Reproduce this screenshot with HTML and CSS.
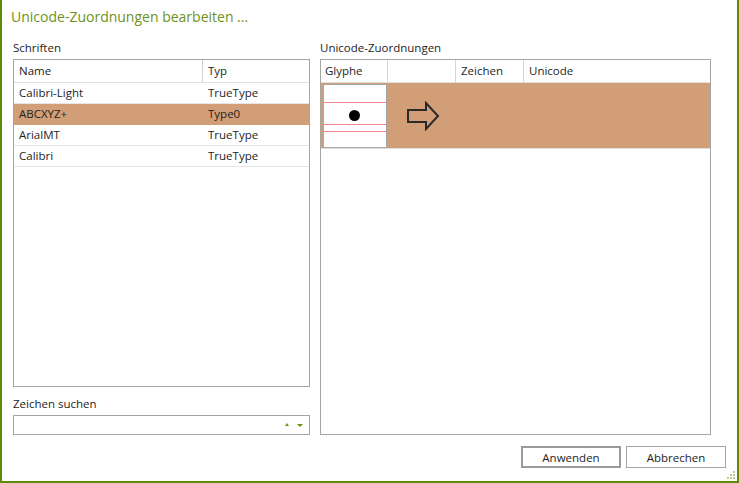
FILE: index.html
```html
<!DOCTYPE html>
<html>
<head>
<meta charset="utf-8">
<title>Unicode-Zuordnungen bearbeiten</title>
<link rel="stylesheet" href="styles.css">
</head>
<body>

<div class="dialog">
  <div class="title">Unicode-Zuordnungen bearbeiten ...</div>

  <div class="main">
    <!-- linke Spalte: Schriften -->
    <div class="col-left">
      <div class="label">Schriften</div>
      <div class="box font-list">
        <div class="row head">
          <div class="cell c-name">Name</div>
          <div class="cell c-typ">Typ</div>
        </div>
        <div class="row">
          <div class="cell c-name">Calibri-Light</div>
          <div class="cell c-typ">TrueType</div>
        </div>
        <div class="row selected">
          <div class="cell c-name">ABCXYZ+</div>
          <div class="cell c-typ">Type0</div>
        </div>
        <div class="row">
          <div class="cell c-name">ArialMT</div>
          <div class="cell c-typ">TrueType</div>
        </div>
        <div class="row">
          <div class="cell c-name">Calibri</div>
          <div class="cell c-typ">TrueType</div>
        </div>
      </div>

      <div class="label label-search">Zeichen suchen</div>
      <div class="combo">
        <span class="spin">
          <svg width="22" height="8" viewBox="0 0 22 8">
            <polygon points="1,5 5,5 3,2" fill="#6a9412"/>
            <polygon points="13,3 19,3 16,6" fill="#6a9412"/>
          </svg>
        </span>
      </div>
    </div>

    <!-- rechte Spalte: Unicode-Zuordnungen -->
    <div class="col-right">
      <div class="label">Unicode-Zuordnungen</div>
      <div class="box map-list">
        <div class="row head">
          <div class="cell m-glyph">Glyphe</div>
          <div class="cell m-arrow"></div>
          <div class="cell m-char">Zeichen</div>
          <div class="cell m-uni">Unicode</div>
        </div>
        <div class="map-row">
          <div class="glyph-box">
            <span class="guide g1"></span>
            <span class="guide g2"></span>
            <span class="guide g3"></span>
            <span class="dot"></span>
          </div>
          <div class="arrow">
            <svg width="34" height="30" viewBox="0 0 34 30">
              <polygon points="2,9 20,9 20,2 32,15 20,28 20,21 2,21" fill="none" stroke="#2a2a2a" stroke-width="2" stroke-linejoin="miter"/>
            </svg>
          </div>
        </div>
      </div>
    </div>
  </div>

  <div class="footer">
    <button class="btn default">Anwenden</button>
    <button class="btn">Abbrechen</button>
  </div>

  <svg class="grip" width="9" height="9" viewBox="0 0 9 9">
    <rect x="6" y="0" width="2" height="2" fill="#b9c98f"/>
    <rect x="3" y="3" width="2" height="2" fill="#b9c98f"/>
    <rect x="6" y="3" width="2" height="2" fill="#b9c98f"/>
    <rect x="0" y="6" width="2" height="2" fill="#b9c98f"/>
    <rect x="3" y="6" width="2" height="2" fill="#b9c98f"/>
    <rect x="6" y="6" width="2" height="2" fill="#b9c98f"/>
  </svg>
</div>

</body>
</html>
```

FILE: styles.css
```css
body {
  margin: 0;
  background: #fff;
  font-family: "Open Sans", "Noto Sans", sans-serif;
  font-size: 11.5px;
  color: #1e1e1e;
}

.dialog {
  position: relative;
  width: 739px;
  height: 483px;
  box-sizing: border-box;
  border: 2px solid #5e8a06;
  border-top: none;
  background: #fff;
}

.title {
  padding: 7px 0 0 9px;
  height: 40px;
  box-sizing: border-box;
  font-size: 14px;
  line-height: 20px;
  color: #6e931c;
}

.main {
  display: flex;
  gap: 10px;
  padding-left: 11px;
  height: 395px;
}

.col-left {
  width: 297px;
  display: flex;
  flex-direction: column;
}

.col-right {
  width: 391px;
  display: flex;
  flex-direction: column;
}

.label {
  line-height: 15px;
  padding-bottom: 4px;
}

.label-search {
  padding-top: 9px;
}

.box {
  border: 1px solid #a5a5a5;
  flex: 1;
  background: #fff;
}

.row {
  display: flex;
  height: 20px;
  border-bottom: 1px solid #e6e6e6;
}

.row.head {
  height: 22px;
  border-bottom: 1px solid #e0e0e0;
}

.row.selected {
  background: #d29e78;
  border-bottom-color: #d29e78;
}

.cell {
  line-height: 20px;
  padding-left: 4px;
  box-sizing: border-box;
  white-space: nowrap;
}

.head .cell {
  line-height: 22px;
  border-right: 1px solid #d5d5d5;
}

.head .cell:last-child {
  border-right: none;
}

.c-name {
  width: 189px;
  padding-left: 5px;
}

.font-list .head .c-name {
  border-right-color: #d0d0d0;
}

.c-typ {
  flex: 1;
}

.font-list .row .c-typ {
  padding-left: 5px;
}

.combo {
  position: relative;
  height: 20px;
  border: 1px solid #a5a5a5;
  box-sizing: border-box;
}

.spin {
  position: absolute;
  right: 3px;
  top: 5px;
  line-height: 0;
}

/* rechte Tabelle */
.m-glyph { width: 67px; }
.m-arrow { width: 68px; }
.m-char  { width: 68px; padding-left: 5px; }
.m-uni   { flex: 1; padding-left: 5px; }

.map-row {
  display: flex;
  align-items: center;
  height: 65px;
  background: #d29e78;
  border-bottom: 1px solid #e0e0e0;
  padding-left: 2px;
}

.glyph-box {
  position: relative;
  width: 64px;
  height: 64px;
  box-sizing: border-box;
  border: 1px solid #a5a5a5;
  background: #fff;
}

.guide {
  position: absolute;
  left: 0;
  right: 0;
  height: 1px;
  background: #f08a8a;
}

.g1 { top: 17px; }
.g2 { top: 39px; }
.g3 { top: 46px; }

.dot {
  position: absolute;
  left: 25px;
  top: 25px;
  width: 11px;
  height: 11px;
  border-radius: 50%;
  background: #000;
}

.arrow {
  margin-left: 19px;
  line-height: 0;
}

/* Buttons unten */
.footer {
  display: flex;
  justify-content: flex-end;
  gap: 5px;
  padding: 11px 11px 0 0;
}

.btn {
  width: 100px;
  height: 22px;
  box-sizing: border-box;
  border: 1px solid #a5a5a5;
  background: #fff;
  font-family: "Open Sans", "Noto Sans", sans-serif;
  font-size: 11.5px;
  color: #1e1e1e;
  padding: 0;
}

.btn.default {
  border: 2px solid #9a9a9a;
}

.grip {
  position: absolute;
  right: 1px;
  bottom: 1px;
}
```
